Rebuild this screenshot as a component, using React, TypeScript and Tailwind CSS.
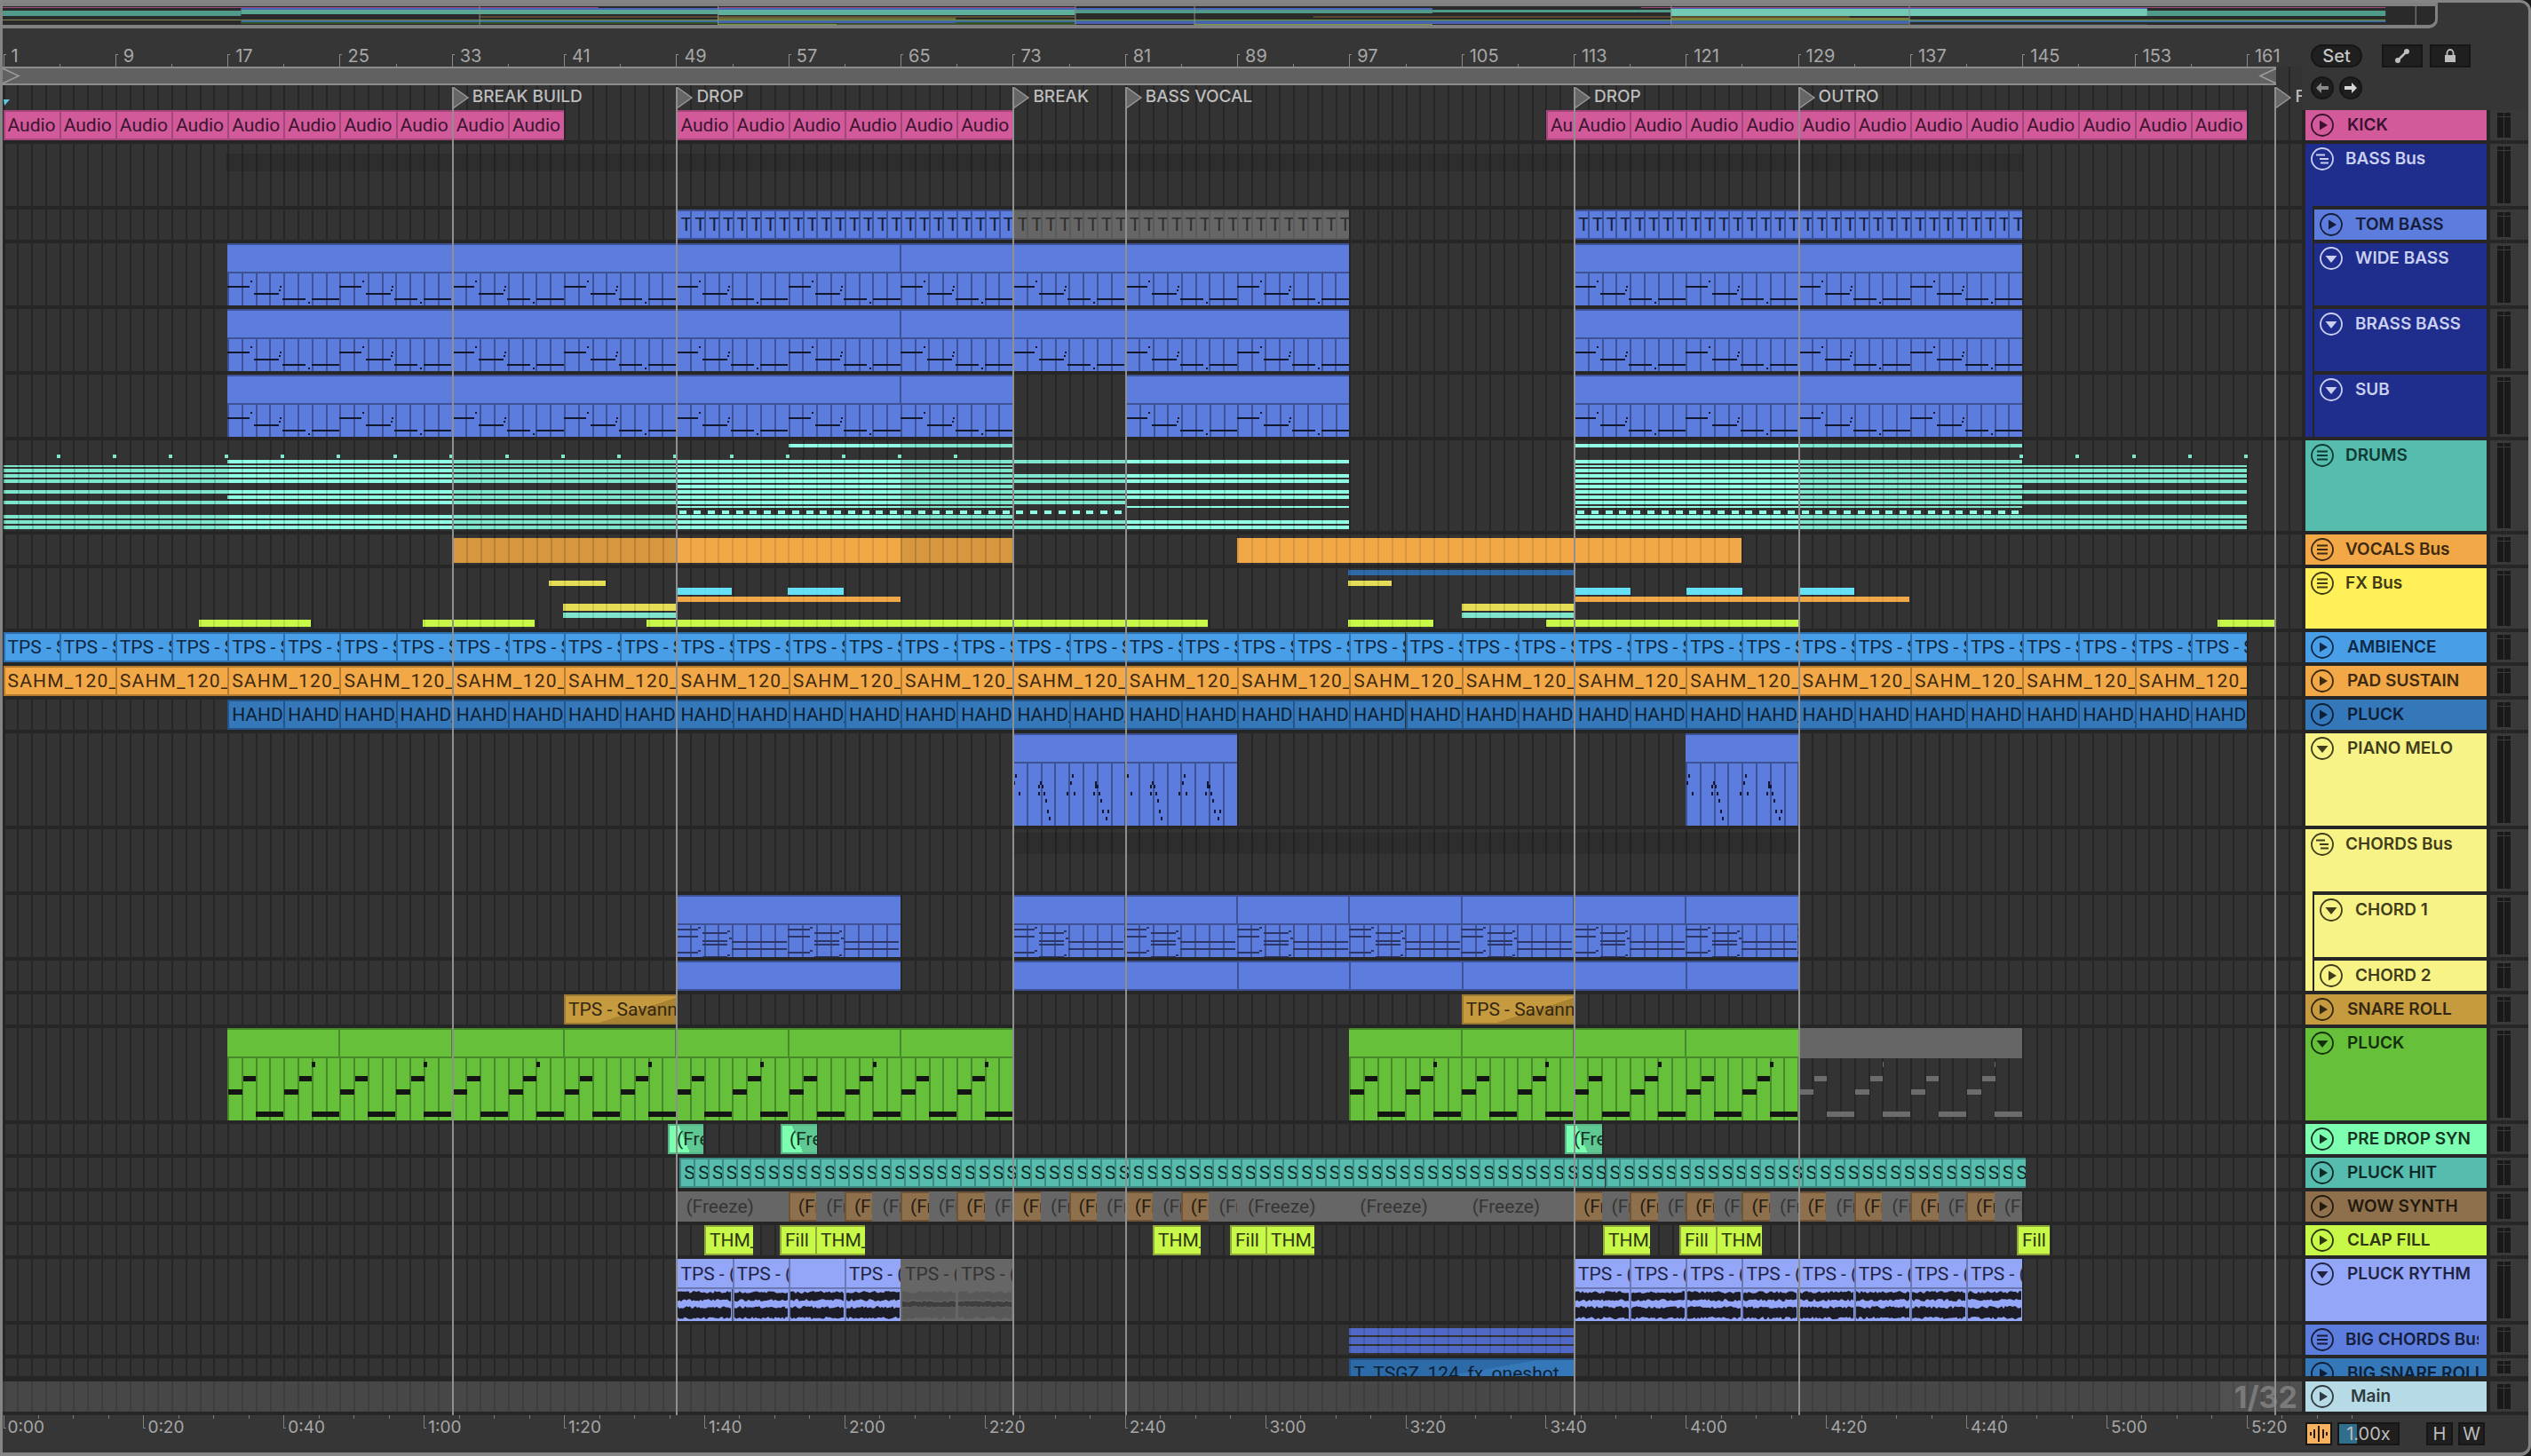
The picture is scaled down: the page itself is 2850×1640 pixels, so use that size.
import React from "react";

const PB = 15.79;
const bx = (b: number) => 3.5 + (b - 1) * PB;
const range = (a: number, b: number, s = 1) => { const r: number[] = []; for (let i = a; i < b; i += s) r.push(i); return r; };

function barLines(x0: number, c: string): React.CSSProperties {
  let a = (bx(1) - x0) % PB; if (a < 0) a += PB;
  return { backgroundImage: `repeating-linear-gradient(90deg, ${c} ${a}px, ${c} ${a + 2}px, transparent ${a + 2}px, transparent ${a + PB}px)` };
}

function Clip({ x0, x1, cls, text, top = 0, h = 34, pad = "pl-[3px]" }: { x0: number; x1: number; cls: string; text?: string; top?: number; h?: number; pad?: string }) {
  return (
    <div className={`absolute box-border border-t-2 border-b-2 border-l-2 flex items-center overflow-hidden text-[21px] leading-none whitespace-nowrap ${pad} ${cls}`}
      style={{ left: x0 - 3, width: x1 - x0, top, height: h }}>{text}</div>
  );
}

const S = {
  kick: "bg-[#d25a9a] border-[#a5467a] text-[#3b1530]",
  tom: "bg-[#5c7ddd] border-[#3e5296] text-[#151d3a]",
  grey: "bg-[#666666] border-[#5a5a5a] text-[#2e2e2e]",
  amb: "bg-[#489fe8] border-[#2d6fae] text-[#0f2740]",
  pad: "bg-[#f2a846] border-[#b57c30] text-[#3d2a10] tracking-[1.2px]",
  pluck: "bg-[#3478ba] border-[#24548a] text-[#0b1f33]",
  snare: "bg-[linear-gradient(162deg,#c69a3f_60%,#a98232_60%)] border-[#9a7a33] text-[#33280f]",
  pre: "bg-[linear-gradient(68deg,#7cffb0_45%,#5fc893_45%)] border-[#57b587] text-[#143322]",
  hit: "bg-[#56bcae] border-[#3c8a80] text-[#0d2a27]",
  wow: "bg-[#8f704c] border-[#6e5539] text-[#261c10]",
  wowg: "bg-[#666666] border-[#666666] text-[#353535]",
  clap: "bg-[#c9f948] border-[#8fa83a] text-[#2c3610]",
  ry: "bg-[#94a6f8] border-[#6a78b4] text-[#1f2444]",
  bigs: "bg-[linear-gradient(170deg,#2c6aa8_50%,#3478ba_50%)] border-[#24548a] text-[#0b1f33]",
};

function Bars({ spans, top, h, cls, line }: { spans: [number, number][]; top: number; h: number; cls: string; line: string }) {
  return <>{spans.map(([a, b], i) => (
    <div key={i} className={`absolute ${cls}`} style={{ left: a - 3, width: b - a, top, height: h, ...barLines(a, line) }} />
  ))}</>;
}

type R = { x: number; y: number; w: number; h: number };
function Midi({ x0, x1, h, titleH, band, title, sep, area, lineC, noteFill, origin, period, notes, dividers = [] }:
  { x0: number; x1: number; h: number; titleH: number; band: string; title: string; sep: string; area: string; lineC: string | null; noteFill: string; origin: number; period: number; notes: R[]; dividers?: number[] }) {
  const rects: React.ReactNode[] = [];
  const w = x1 - x0;
  const areaH = h - titleH - 4;
  const k0 = Math.floor((x0 - origin) / period) - 1;
  const k1 = Math.ceil((x1 - origin) / period);
  for (let k = k0; k <= k1; k++) notes.forEach((n, i) => rects.push(
    <rect key={k + "-" + i} x={origin + k * period + n.x - x0} y={n.y} width={n.w} height={n.h} fill={noteFill} />
  ));
  return (
    <div className="absolute flex flex-col" style={{ left: x0 - 3, width: w, top: 0, height: h }}>
      <div className={`h-[2px] shrink-0 ${band}`} />
      <div className={`relative shrink-0 ${title}`} style={{ height: titleH }}>
        {dividers.filter(d => d > x0 + 1 && d < x1 - 1).map(d => <div key={d} className={`absolute top-0 bottom-0 w-[2px] ${band}`} style={{ left: d - x0 - 1 }} />)}
      </div>
      <div className={`h-[2px] shrink-0 ${sep}`} />
      <div className={`relative grow overflow-hidden ${area}`} style={lineC ? barLines(x0, lineC) : undefined}>
        <svg width={w} height={areaH} className="absolute inset-0" shapeRendering="crispEdges">{rects}</svg>
      </div>
    </div>
  );
}

const bassNotes: R[] = [
  { x: 0, y: 14, w: 25, h: 2 }, { x: 26, y: 8, w: 2, h: 2 }, { x: 30, y: 22, w: 28, h: 2 }, { x: 58, y: 18, w: 2, h: 2 }, { x: 59, y: 14, w: 2, h: 2 },
  { x: 62, y: 28, w: 26, h: 2 }, { x: 91, y: 32, w: 2, h: 2 }, { x: 95, y: 28, w: 31, h: 2 },
];
const pianoNotes: R[] = [[3,12],[1,20],[7,32],[31,20],[29,24],[33,24],[29,32],[35,32],[37,40],[39,52],[41,60],[67,12],[65,20],[61,32],[69,32],[93,20],[93,24],[95,24],[91,32],[97,32],[99,40],[101,52],[107,52],[105,60]].map(([x, y]) => ({ x, y, w: 2, h: 4 }));
const chordNotes: R[] = [
  [0,4,25],[30,8,28],[0,12,25],[30,17,28],[63,18,62],[30,21,28],[63,26,62],[0,30,25],[30,35,28],[63,36,62],
  [25,2,3],[58,6,3],[60,14,3],[25,28,3],[58,33,3],
].map(([x, y, w]) => ({ x, y, w, h: 2 }));
const greenNotes = (thin: number): R[] => [
  ...[0, 1].flatMap(k => [
    { x: k * 63.16 + 17.6, y: 20, w: 14.5, h: 6 },
    { x: k * 63.16 + 1, y: 35, w: 16, h: 6 },
    { x: k * 63.16 + 32, y: 60, w: 31, h: 6 },
  ]),
  { x: 95, y: 4, w: thin, h: 6 },
];

const BASS = (spans: [number, number][]) => spans.map(([a, b]) => (
  <Midi key={a} x0={bx(a)} x1={bx(b)} h={70} titleH={30} band="bg-[#3e5296]" title="bg-[#5c7ddd]" sep="bg-[#3e5296]" area="bg-[#5c7ddd]" lineC="#3e5296" noteFill="#12182e" origin={bx(17)} period={126.32} notes={bassNotes} dividers={[bx(65), bx(113)]} />
));

function Drums() {
  const zones: [number, number, boolean][] = [[1, 17, false], [17, 33, true], [33, 49, false], [49, 65, true], [65, 81, false], [81, 97, true], [97, 113, false], [113, 129, true], [129, 145, false], [145, 161, false]];
  const lines: [number, number, [number, number][]][] = [
    [500, 4, [[57, 73], [113, 145]]],
    [518, 4, [[17, 97], [113, 145]]],
    [524, 2, [[1, 73], [113, 161]]],
    [528, 4, [[1, 73], [113, 161]]],
    [534, 4, [[1, 97], [113, 161]]],
    [540, 4, [[1, 97], [113, 161]]],
    [546, 4, [[49, 73], [113, 145]]],
    [552, 4, [[1, 97], [113, 161]]],
    [558, 4, [[17, 97], [113, 145]]],
    [564, 4, [[1, 81], [113, 161]]],
    [570, 2, [[49, 73], [81, 97], [113, 145]]],
    [580, 4, [[1, 73], [113, 161]]],
    [586, 4, [[1, 97], [113, 161]]],
    [592, 4, [[1, 97], [113, 161]]],
  ];
  const out: React.ReactNode[] = [];
  lines.forEach(([y, h, spans]) => spans.forEach(([a, b]) => zones.forEach(([z0, z1, br]) => {
    const s = Math.max(a, z0), e = Math.min(b, z1);
    if (s >= e) return;
    const x0 = bx(s), x1 = bx(e);
    out.push(<div key={y + "-" + s} className={`absolute ${br ? "bg-[#8fffe6]" : "bg-[#7fe6ce]"}`} style={{ left: x0 - 3, width: x1 - x0, top: y - 496, height: h, ...barLines(x0, "rgba(0,0,0,0.16)") }} />);
  })));
  [...range(5, 73, 4), ...range(145, 162, 4)].forEach(b => out.push(<div key={"t" + b} className="absolute w-[4px] h-[4px] bg-[#7fe6ce]" style={{ left: bx(b) - 6, top: 16 }} />));
  [...range(49, 81), ...range(113, 145)].forEach(b => out.push(<div key={"d" + b} className="absolute w-[8px] h-[4px] bg-[#8fffe6]" style={{ left: bx(b) + 1, top: 79 }} />));
  return <>{out}</>;
}

function Wave({ x0, x1, grey }: { x0: number; x1: number; grey?: boolean }) {
  const w = x1 - x0;
  let seed = Math.round(x0 * 7) + 13;
  const rnd = () => { seed = (seed * 1103515 + 12345) % 65536; return seed / 65536; };
  const top: string[] = [], mid1: string[] = [], mid2: string[] = [], bot: string[] = [];
  for (let x = 0; x <= w; x += 2) {
    top.push(`${x},${2 + rnd() * 3}`);
    mid1.push(`${x},${14 - rnd() * 3}`);
    mid2.push(`${x},${19 + rnd() * 3}`);
    bot.push(`${x},${31 + rnd() * 3}`);
  }
  const dark = grey ? "#585858" : "#1c1c26";
  const bg = grey ? "#666666" : "#94a6f8";
  return (
    <svg width={w} height={36} className="block">
      <rect width={w} height={36} fill={bg} />
      <polygon points={[...top, ...mid1.slice().reverse()].join(" ")} fill={dark} />
      <polygon points={[...mid2, ...bot.slice().reverse()].join(" ")} fill={dark} />
      {grey && <polygon points={[...mid1, ...mid2.slice().reverse()].join(" ")} fill="#3f3f3f" transform={`translate(0 5) scale(1 0.72)`} />}
    </svg>
  );
}

function Rythm({ b0, grey, text }: { b0: number; grey?: boolean; text?: string }) {
  const x0 = bx(b0), x1 = bx(b0 + 4);
  return (
    <div className={`absolute flex flex-col border-l-2 box-border ${grey ? "border-[#666666]" : "border-[#6a78b4]"}`} style={{ left: x0 - 3, width: x1 - x0, top: 0, height: 70 }}>
      <div className={`h-[32px] flex items-center overflow-hidden pl-[3px] pt-[2px] text-[21px] leading-none whitespace-nowrap shrink-0 ${grey ? "bg-[#666666] text-[#333333]" : "bg-[#94a6f8] text-[#1f2444]"}`}>{text}</div>
      <div className={`h-[2px] shrink-0 ${grey ? "bg-[#666666]" : "bg-[#6a78b4]"}`} />
      <Wave x0={x0} x1={x1 - 2} grey={grey} />
    </div>
  );
}

function Icon({ kind }: { kind: "play" | "down" | "lines" | "stag" }) {
  return (
    <svg width="26" height="26" viewBox="0 0 26 26" className="shrink-0">
      <circle cx="13" cy="13" r="12" fill="none" stroke="currentColor" strokeWidth="1.8" />
      {kind === "play" && <polygon points="10,7.5 19,13 10,18.5" fill="currentColor" />}
      {kind === "down" && <polygon points="6.5,10 19.5,10 13,18" fill="currentColor" />}
      {kind === "lines" && <path d="M7 8.5H19M7 13H19M7 17.5H19" stroke="currentColor" strokeWidth="2" />}
      {kind === "stag" && <path d="M6 8.5H16M10 13H20M11 17.5H20" stroke="currentColor" strokeWidth="2" />}
    </svg>
  );
}

type Row = {
  h: number; name: string; icon: "play" | "down" | "lines" | "stag"; bg: string; fg: string; ml?: string; nested?: string; gapStrip?: string; gap?: number; main?: boolean; lane?: React.ReactNode; clip?: boolean;
};

const NAVY = "bg-[#1f2d8c]", CREAM = "bg-[#f7f387]";
const ct = (bars: number[], span: number, cls: string, text?: string) => bars.map(b => <Clip key={b} x0={bx(b)} x1={bx(b + span)} cls={cls} text={text} />);
const fxLime: [number, number][] = [[224, 350], [476, 602], [728, 1360], [1518, 1614], [1741, 2025], [2497, 2563]];

const rows: Row[] = [
  { h: 34, name: "KICK", icon: "play", bg: "bg-[#d25a9a]", fg: "text-[#3a1230]", lane: <>{ct(range(1, 41, 4), 4, S.kick, "Audio")}{ct(range(49, 73, 4), 4, S.kick, "Audio")}<Clip x0={1741} x1={bx(113)} cls={S.kick} text="Au" />{ct(range(113, 161, 4), 4, S.kick, "Audio")}</> },
  { h: 70, name: "BASS Bus", icon: "stag", bg: NAVY, fg: "text-[#c9cff0]", ml: "ml-[13px]", gapStrip: NAVY, lane: <div className="absolute left-[251px] w-[2024px] top-[11px] h-[20px] bg-black/10" /> },
  { h: 34, name: "TOM BASS", icon: "play", bg: "bg-[#5c7ddd]", fg: "text-[#151d3a]", ml: "ml-[14px]", nested: NAVY, gapStrip: NAVY, lane: <>{ct(range(49, 73), 1, S.tom, "T")}{ct(range(73, 97), 1, S.grey, "T")}{ct(range(113, 145), 1, S.tom, "T")}</> },
  { h: 70, name: "WIDE BASS", icon: "down", bg: NAVY, fg: "text-[#c9cff0]", ml: "ml-[14px]", nested: NAVY, gapStrip: NAVY, lane: BASS([[17, 97], [113, 145]]) },
  { h: 70, name: "BRASS BASS", icon: "down", bg: NAVY, fg: "text-[#c9cff0]", ml: "ml-[14px]", nested: NAVY, gapStrip: NAVY, lane: BASS([[17, 97], [113, 145]]) },
  { h: 70, name: "SUB", icon: "down", bg: NAVY, fg: "text-[#c9cff0]", ml: "ml-[14px]", nested: NAVY, lane: BASS([[17, 73], [81, 97], [113, 145]]) },
  { h: 102, name: "DRUMS", icon: "lines", bg: "bg-[#56bcae]", fg: "text-[#0f3a34]", ml: "ml-[13px]", lane: <Drums /> },
  { h: 34, name: "VOCALS Bus", icon: "lines", bg: "bg-[#f2a846]", fg: "text-[#3d2a10]", ml: "ml-[13px]", lane: <>
    <Bars spans={[[bx(33), bx(49)], [bx(65), bx(73)]]} top={4} h={28} cls="bg-[#d6973f]" line="rgba(0,0,0,0.14)" />
    <Bars spans={[[bx(49), bx(65)], [bx(89), bx(125)]]} top={4} h={28} cls="bg-[#f2a846]" line="rgba(0,0,0,0.1)" /></> },
  { h: 68, name: "FX Bus", icon: "lines", bg: "bg-[#fff05a]", fg: "text-[#3f3a10]", ml: "ml-[13px]", lane: <>
    <Bars spans={[[1518, 1772]]} top={2} h={6} cls="bg-[#2f6aa8]" line="rgba(0,0,0,0.12)" />
    <Bars spans={[[618, 682], [1518, 1567]]} top={14} h={6} cls="bg-[#e4dd55]" line="rgba(0,0,0,0.1)" />
    <Bars spans={[[761, 824], [887, 950], [1772, 1836], [1899, 1962], [2025, 2088]]} top={22} h={8} cls="bg-[#66e0f5]" line="rgba(0,0,0,0.02)" />
    <Bars spans={[[761, 1014], [1772, 2150]]} top={32} h={6} cls="bg-[#f2a846]" line="rgba(0,0,0,0.06)" />
    <Bars spans={[[634, 761], [1646, 1772]]} top={40} h={8} cls="bg-[#e4dd55]" line="rgba(0,0,0,0.1)" />
    <Bars spans={[[634, 761], [1646, 1772]]} top={50} h={6} cls="bg-[#7fe6ce]" line="rgba(0,0,0,0.1)" />
    <Bars spans={fxLime} top={58} h={8} cls="bg-[#c9f948]" line="rgba(0,0,0,0.1)" /></> },
  { h: 34, name: "AMBIENCE", icon: "play", bg: "bg-[#489fe8]", fg: "text-[#0f2a48]", lane: ct(range(1, 161, 4), 4, S.amb, "TPS - S") },
  { h: 34, name: "PAD SUSTAIN", icon: "play", bg: "bg-[#f2a846]", fg: "text-[#3d2a10]", lane: ct(range(1, 161, 8), 8, S.pad, "SAHM_120_P") },
  { h: 34, name: "PLUCK", icon: "play", bg: "bg-[#3478ba]", fg: "text-[#0b2038]", lane: ct(range(17, 161, 4), 4, S.pluck, "HAHD_") },
  { h: 104, name: "PIANO MELO", icon: "down", bg: CREAM, fg: "text-[#3f3d1a]", lane: [[73, 89], [121, 129]].map(([a, b]) => (
    <Midi key={a} x0={bx(a)} x1={bx(b)} h={104} titleH={30} band="bg-[#3e5296]" title="bg-[#5c7ddd]" sep="bg-[#3e5296]" area="bg-[#5c7ddd]" lineC="#3e5296" noteFill="#12182e" origin={bx(73)} period={126.32} notes={pianoNotes} />
  )) },
  { h: 70, name: "CHORDS Bus", icon: "stag", bg: CREAM, fg: "text-[#3f3d1a]", ml: "ml-[13px]", gapStrip: CREAM, lane: <div className="absolute left-[1138px] w-[884px] top-[4px] h-[24px] bg-black/10" /> },
  { h: 70, name: "CHORD 1", icon: "down", bg: CREAM, fg: "text-[#3f3d1a]", ml: "ml-[14px]", nested: CREAM, gapStrip: CREAM, lane: [[49, 65], [73, 129]].map(([a, b]) => (
    <Midi key={a} x0={bx(a)} x1={bx(b)} h={70} titleH={30} band="bg-[#3e5296]" title="bg-[#5c7ddd]" sep="bg-[#3e5296]" area="bg-[#5c7ddd]" lineC="#3e5296" noteFill="#2b3768" origin={bx(49)} period={126.32} notes={chordNotes} dividers={[bx(81), bx(89), bx(97), bx(105), bx(113), bx(121)]} />
  )) },
  { h: 34, name: "CHORD 2", icon: "play", bg: CREAM, fg: "text-[#3f3d1a]", ml: "ml-[14px]", nested: CREAM, lane: <>
    <Clip x0={bx(49)} x1={bx(65)} cls="bg-[#5c7ddd] border-[#3e5296]" />
    {range(73, 129, 8).map(b => <Clip key={b} x0={bx(b)} x1={bx(b + 8)} cls="bg-[#5c7ddd] border-[#3e5296]" />)}</> },
  { h: 34, name: "SNARE ROLL", icon: "play", bg: "bg-[#c69a3f]", fg: "text-[#33280f]", lane: <>
    <Clip x0={bx(41)} x1={bx(49)} cls={S.snare} text="TPS - Savanna" /><Clip x0={bx(105)} x1={bx(113)} cls={S.snare} text="TPS - Savanna" /></> },
  { h: 104, name: "PLUCK", icon: "down", bg: "bg-[#66c03a]", fg: "text-[#14300a]", lane: <>
    {[[17, 73], [97, 129]].map(([a, b]) => (
      <Midi key={a} x0={bx(a)} x1={bx(b)} h={104} titleH={30} band="bg-[#478a2a]" title="bg-[#66c03a]" sep="bg-[#478a2a]" area="bg-[#66c03a]" lineC="#478a2a" noteFill="#141414" origin={bx(17)} period={126.32} notes={greenNotes(4)} dividers={range(17, 129, 8).map(bx)} />
    ))}
    <Midi x0={bx(129)} x1={bx(145)} h={104} titleH={30} band="bg-[#666666]" title="bg-[#666666]" sep="bg-[#666666]" area="" lineC={null} noteFill="#6c6c6c" origin={bx(17)} period={126.32} notes={greenNotes(1)} />
  </> },
  { h: 34, name: "PRE DROP SYN", icon: "play", bg: "bg-[#7cffb0]", fg: "text-[#143322]", lane: [[752, 792], [879, 920], [1762, 1804]].map(([a, b]) => <Clip key={a} x0={a} x1={b} cls={S.pre} pad="pl-[8px]" text="(Fre" />) },
  { h: 34, name: "PLUCK HIT", icon: "play", bg: "bg-[#56bcae]", fg: "text-[#0d2a27]", lane: ct(range(49.25, 145.25), 1, S.hit, "S") },
  { h: 34, name: "WOW SYNTH", icon: "play", bg: "bg-[#8f704c]", fg: "text-[#231a0e]", lane: <>
    <Clip x0={bx(49)} x1={bx(57)} cls={S.wowg} pad="pl-[9px]" text="(Freeze)" />
    {[...range(57, 89, 2), ...range(113, 145, 2)].map(b => <Clip key={b} x0={bx(b)} x1={bx(b + 2)} cls={b % 4 === 1 ? S.wow : S.wowg} pad="pl-[9px]" text="(Fr" />)}
    {[89, 97, 105].map(b => <Clip key={b} x0={bx(b)} x1={bx(b + 8)} cls={S.wowg} pad="pl-[10px]" text="(Freeze)" />)}</> },
  { h: 34, name: "CLAP FILL", icon: "play", bg: "bg-[#c9f948]", fg: "text-[#2c3610]", lane: ([[793, 848, "THM_"], [878, 918, "Fill"], [918, 974, "THM_"], [1298, 1352, "THM_"], [1385, 1425, "Fill"], [1425, 1480, "THM_"], [1805, 1858, "THM_"], [1891, 1932, "Fill"], [1932, 1984, "THM_"], [2271, 2308, "Fill"]] as [number, number, string][]).map(([a, b, t]) => <Clip key={a} x0={a} x1={b} cls={S.clap} text={t} pad="pl-[4px]" />) },
  { h: 70, name: "PLUCK RYTHM", icon: "down", bg: "bg-[#94a6f8]", fg: "text-[#1f2444]", lane: <>
    <Rythm b0={49} text="TPS - (" /><Rythm b0={53} text="TPS - (" /><Rythm b0={57} /><Rythm b0={61} text="TPS - (" /><Rythm b0={65} grey text="TPS - (" /><Rythm b0={69} grey text="TPS - (" />
    {range(113, 145, 4).map(b => <Rythm key={b} b0={b} text="TPS - (" />)}</> },
  { h: 34, name: "BIG CHORDS Bus", icon: "lines", bg: "bg-[#5c7ddd]", fg: "text-[#151d3a]", ml: "ml-[13px]", lane: <>
    <Bars spans={[[bx(97), bx(113)]]} top={4} h={8} cls="bg-[#5069c6]" line="rgba(0,0,0,0.12)" />
    <Bars spans={[[bx(97), bx(113)]]} top={14} h={8} cls="bg-[#5069c6]" line="rgba(0,0,0,0.12)" />
    <Bars spans={[[bx(97), bx(113)]]} top={24} h={8} cls="bg-[#5069c6]" line="rgba(0,0,0,0.12)" /></> },
  { h: 20, gap: 6, clip: true, name: "BIG SNARE ROLL", icon: "play", bg: "bg-[#3478ba]", fg: "text-[#0b2038]", lane: <Clip x0={bx(97)} x1={bx(113)} cls={S.bigs} text="T_TSGZ_124_fx_oneshot" /> },
  { h: 34, main: true, name: "Main", icon: "play", bg: "bg-[#b7dbe6]", fg: "text-[#2f3a40]", ml: "ml-[19px]", lane: <div className="absolute right-0 top-0 h-[34px] w-[92px] flex items-center justify-end pr-[5px] bg-white/5 font-['Inter',sans-serif] font-bold text-[34px] text-[#7a7a7a]">1/32</div> },
];

function Meter() {
  return (
    <div className="flex flex-col gap-[1px] w-[7px] h-full">
      <div className="h-[4px] bg-[#191919] shrink-0" />
      <div className="grow bg-[#191919]" />
    </div>
  );
}

function TrackRow({ r }: { r: Row }) {
  const gap = r.gap ?? 4;
  return (
    <div className="flex flex-col">
      <div className="flex" style={{ height: r.h }}>
        <div className={`relative w-[2589px] shrink-0 ${r.main ? "bg-[#474747]" : "bg-[#333333]"} ${r.clip ? "overflow-hidden" : ""}`} style={barLines(3, r.main ? "#3e3e3e" : "#262626")}>{r.lane}</div>
        <div className="w-[4px] shrink-0" />
        <div className="w-[204px] shrink-0 flex overflow-hidden">
          {r.nested && <><div className={`w-[8px] shrink-0 ${r.nested}`} /><div className="w-[2px] shrink-0" /></>}
          <div className={`grow flex items-start pt-[4px] pl-[6px] h-[34px] min-h-full font-['Inter',sans-serif] font-semibold text-[19px] leading-[26px] whitespace-nowrap overflow-hidden ${r.bg} ${r.fg}`}>
            <Icon kind={r.icon} />
            <span className={`max-w-[150px] overflow-hidden ${r.ml ?? "ml-[15px]"}`}>{r.name}</span>
          </div>
        </div>
        <div className="w-[4px] shrink-0" />
        <div className="w-[43px] shrink-0 bg-[#393939] flex gap-[1px] pl-[8px] py-[3px]">
          <Meter /><Meter />
        </div>
      </div>
      <div className="flex shrink-0" style={{ height: gap }}>
        <div className="w-[2593px] shrink-0" />
        {r.gapStrip && <div className={`w-[8px] ${r.gapStrip}`} />}
      </div>
    </div>
  );
}

function Overview() {
  const x = (b: number) => (b - 1) * 16.77;
  const rs: [number, number, number, number, string][] = [
    [1, 41, 1, 1, "#9c4a78"], [49, 73, 1, 1, "#9c4a78"], [111, 161, 1, 1, "#9c4a78"],
    [17, 97, 2, 2, "#4a62b8"], [113, 145, 2, 2, "#4a62b8"],
    [1, 17, 5, 6, "#4f9a88"], [17, 49, 4, 5, "#5aa893"], [49, 73, 4, 6, "#5fb09c"], [73, 97, 4, 4, "#53998a"], [97, 113, 4, 3, "#4f9a88"], [113, 145, 3, 8, "#72c9b4"], [145, 161, 5, 6, "#4f9a88"],
    [33, 73, 11.5, 1, "#8a6b35"], [89, 125, 11.5, 1, "#8a6b35"], [49, 65, 12.5, 3, "#6f6b38"], [113, 129, 13, 2, "#7d7a3a"],
    [1, 17, 15, 1, "#8a8a55"], [17, 33, 15, 1, "#7d7d4a"], [33, 161, 15, 1, "#7a8f3a"],
    [17, 161, 16, 2, "#3a6fa0"], [17, 73, 18.5, 1, "#3d7a2a"], [97, 129, 18.5, 1, "#3d7a2a"],
    [49, 65, 17, 2, "#4a60b0"], [73, 129, 17.5, 2.5, "#4a60b0"],
    [49, 57, 20, 1, "#7a9a3a"], [57, 73, 20.5, 1, "#687a3a"], [81, 97, 20, 1, "#7a9a3a"], [113, 129, 20.5, 1, "#6a8a3a"], [129, 145, 20.5, 1, "#4a5a64"],
    [97, 113, 22.5, 1, "#3f62b4"], [39, 41, 22.5, 1, "#2f6aa8"],
  ];
  return (
    <div className="h-[29px] w-[2742px] border-y-[4px] border-r-[3px] border-[#808080] rounded-br-[10px] bg-[#2a2a2a] overflow-hidden">
      <svg width="2740" height="21" className="block">
        {rs.map(([a, b, y, h, c], i) => <rect key={i} x={x(a)} y={y} width={x(b) - x(a)} height={h} fill={c} />)}
        {[33, 49, 73, 81, 113, 129, 163].map(b => <rect key={b} x={x(b)} y={0} width={1} height={21} fill="#8d8d8d" />)}
      </svg>
    </div>
  );
}

function Ruler() {
  return (
    <div className="relative h-[43px] w-[2589px] font-['Inter',sans-serif] text-[#a6a6a6] text-[20px] leading-[20px]">
      {range(1, 162, 8).map(b => (
        <React.Fragment key={b}>
          <div className="absolute top-[29px] h-[14px] w-[1px] bg-[#8a8a8a]" style={{ left: bx(b) - 3 }} />
          <div className="absolute top-[29px] h-[1px] w-[3px] bg-[#8a8a8a]" style={{ left: bx(b) - 3 }} />
          <div className="absolute top-[21px]" style={{ left: bx(b) + 6 }}>{b}</div>
          {b < 161 && <div className="absolute top-[40px] h-[3px] w-[1px] bg-[#8a8a8a]" style={{ left: bx(b + 4) - 3 }} />}
        </React.Fragment>
      ))}
    </div>
  );
}

function Loop() {
  return (
    <div className="flex h-[21px] w-[2589px]">
      <div className="w-[2560px] shrink-0 bg-[#616161] border-y-[2px] border-[#8c8c8c] flex justify-between">
        <svg width="20" height="17" viewBox="0 0 20 17"><polyline points="0,0 18,8.5 0,17" fill="none" stroke="#9a9a9a" strokeWidth="1.6" /></svg>
        <svg width="20" height="17" viewBox="0 0 20 17"><polyline points="20,0 2,8.5 20,17" fill="none" stroke="#9a9a9a" strokeWidth="1.6" /></svg>
      </div>
      <div className="grow bg-[#333333]" style={barLines(2563, "#262626")} />
    </div>
  );
}

function LocatorRow() {
  const ls: [number, string][] = [[33, "BREAK BUILD"], [49, "DROP"], [73, "BREAK"], [81, "BASS VOCAL"], [113, "DROP"], [129, "OUTRO"], [163, "F"]];
  return (
    <div className="relative h-[28px] w-[2589px] bg-[#333333] overflow-hidden font-['Inter',sans-serif] font-medium text-[19px] text-[#bdbdbd]" style={barLines(3, "#262626")}>
      <svg width="7" height="7" className="absolute left-[1px] top-[16px]"><polygon points="0,0 7,0 1,7" fill="#5fc8e0" /></svg>
      {ls.map(([b, t]) => (
        <div key={b + t} className="absolute top-[2px] h-[24px] flex items-center whitespace-nowrap" style={{ left: bx(b) - 3 }}>
          <svg width="20" height="24" viewBox="0 0 20 24" className="shrink-0"><polygon points="1,0 18,12 1,24" fill="#666666" stroke="#999999" strokeWidth="1.4" /></svg>
          <span className="ml-[3px] -mt-[2px]">{t}</span>
        </div>
      ))}
    </div>
  );
}

function HeaderRight() {
  const sq = "w-[46px] h-[26px] bg-[#1f1f1f] border-2 border-[#161616] flex items-center justify-center";
  const ci = "w-[26px] h-[26px] rounded-full bg-[#1f1f1f] border-2 border-[#161616] flex items-center justify-center";
  return (
    <div className="grow pl-[10px] pt-[18px] font-['Inter',sans-serif]">
      <div className="flex items-center">
        <div className="w-[58px] h-[26px] rounded-full bg-[#1f1f1f] border-2 border-[#161616] flex items-center justify-center text-[#c6c6c6] text-[20px] font-medium">Set</div>
        <div className={`${sq} ml-[22px]`}>
          <svg width="18" height="18" viewBox="0 0 18 18"><path d="M4 14L14 4" stroke="#bdbdbd" strokeWidth="2.5" /><circle cx="4" cy="14" r="3" fill="#bdbdbd" /><circle cx="14" cy="4" r="3" fill="#bdbdbd" /></svg>
        </div>
        <div className={`${sq} ml-[8px]`}>
          <svg width="16" height="16" viewBox="0 0 16 16"><rect x="2" y="7" width="12" height="8" fill="#bdbdbd" /><path d="M4.5 7V4.5a3.5 3.5 0 0 1 7 0V7" fill="none" stroke="#bdbdbd" strokeWidth="1.8" /></svg>
        </div>
      </div>
      <div className="flex gap-[6px] mt-[10px]">
        <div className={ci}><svg width="16" height="14" viewBox="0 0 16 14"><path d="M1 7L7 1V5H15V9H7V13Z" fill="#8a8a8a" /></svg></div>
        <div className={ci}><svg width="16" height="14" viewBox="0 0 16 14"><path d="M15 7L9 1V5H1V9H9V13Z" fill="#d6d6d6" /></svg></div>
      </div>
    </div>
  );
}

function Bottom() {
  const o = (n: number) => 3.5 + n * 39.475;
  const fmt = (i: number) => `${Math.floor((i * 20) / 60)}:${String((i * 20) % 60).padStart(2, "0")}`;
  const box = "h-[26px] bg-[#1f1f1f] border-2 border-[#161616] flex items-center justify-center";
  return (
    <div className="flex h-[42px] font-['Inter',sans-serif] text-[#a6a6a6] text-[19px] leading-[20px]">
      <div className="relative w-[2593px] shrink-0">
        {range(0, 68).map(n => n % 4 === 0 ? (
          <React.Fragment key={n}>
            <div className="absolute top-0 h-[15px] w-[1px] bg-[#7e7e7e]" style={{ left: o(n) - 3 }} />
            <div className="absolute top-[14px] h-[1px] w-[3px] bg-[#7e7e7e]" style={{ left: o(n) - 3 }} />
            <div className="absolute top-[4px]" style={{ left: o(n) + 2 }}>{fmt(n / 4)}</div>
          </React.Fragment>
        ) : <div key={n} className="absolute top-0 h-[4px] w-[1px] bg-[#7e7e7e]" style={{ left: o(n) - 3 }} />)}
      </div>
      <div className="flex items-start pt-[8px] grow">
        <div className={`${box} w-[30px] !bg-[#f7b25f]`}>
          <svg width="22" height="22" viewBox="0 0 22 22"><path d="M2 9V13M6 6V16M11 2V20M16 6V16M20 9V13" stroke="#2a1c08" strokeWidth="2" /></svg>
        </div>
        <div className="relative ml-[6px] w-[70px] h-[26px] bg-[#1f1f1f] border-2 border-[#161616]">
          <div className="absolute left-0 top-0 bottom-0 w-[20px] bg-[#2f6f8c]" />
          <div className="relative text-center leading-[22px] text-[#bdbdbd] text-[20px]">1.00x</div>
        </div>
        <div className={`${box} w-[30px] ml-[30px] text-[#bdbdbd] text-[20px]`}>H</div>
        <div className={`${box} w-[30px] ml-[6px] text-[#bdbdbd] text-[20px]`}>W</div>
      </div>
    </div>
  );
}

export default function App() {
  return (
    <div className="w-[2850px] h-[1640px] bg-[#1a1a1a]">
      <div className="w-full h-full box-border border-x-[3px] border-t-[3px] border-b-[4px] border-[#858585] rounded-r-[12px] bg-[#363636] overflow-hidden font-['Roboto',sans-serif] flex flex-col">
        <Overview />
        <div className="relative flex flex-col">
          <div className="flex h-[92px] bg-[#363636]">
            <div className="w-[2589px] shrink-0 flex flex-col">
              <Ruler />
              <Loop />
              <LocatorRow />
            </div>
            <HeaderRight />
          </div>
          <div className="flex flex-col bg-[#262626]">
            {rows.map((r, i) => <TrackRow key={i} r={r} />)}
          </div>
          {[33, 49, 73, 81, 113, 129, 163].map(b => (
            <div key={b} className="absolute w-[2px] bg-[#8f8f8f] top-[66px] bottom-0" style={{ left: bx(b) - 3 }} />
          ))}
        </div>
        <Bottom />
      </div>
    </div>
  );
}
